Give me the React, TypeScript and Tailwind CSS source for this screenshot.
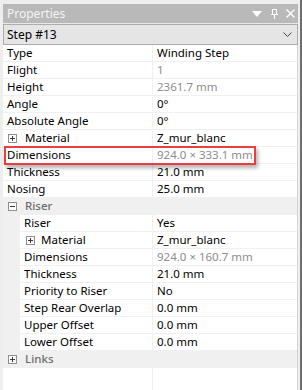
import React from 'react';

type Row =
  | { kind: 'prop'; name: string; value: string; level?: 0 | 1; expand?: boolean; dim?: boolean }
  | { kind: 'cat'; name: string; open: boolean };

const rows: Row[] = [
  { kind: 'prop', name: 'Type', value: 'Winding Step' },
  { kind: 'prop', name: 'Flight', value: '1', dim: true },
  { kind: 'prop', name: 'Height', value: '2361.7 mm', dim: true },
  { kind: 'prop', name: 'Angle', value: '0°' },
  { kind: 'prop', name: 'Absolute Angle', value: '0°' },
  { kind: 'prop', name: 'Material', value: 'Z_mur_blanc', expand: true },
  { kind: 'prop', name: 'Dimensions', value: '924.0 × 333.1 mm', dim: true },
  { kind: 'prop', name: 'Thickness', value: '21.0 mm' },
  { kind: 'prop', name: 'Nosing', value: '25.0 mm' },
  { kind: 'cat', name: 'Riser', open: true },
  { kind: 'prop', name: 'Riser', value: 'Yes', level: 1 },
  { kind: 'prop', name: 'Material', value: 'Z_mur_blanc', level: 1, expand: true },
  { kind: 'prop', name: 'Dimensions', value: '924.0 × 160.7 mm', level: 1, dim: true },
  { kind: 'prop', name: 'Thickness', value: '21.0 mm', level: 1 },
  { kind: 'prop', name: 'Priority to Riser', value: 'No', level: 1 },
  { kind: 'prop', name: 'Step Rear Overlap', value: '0.0 mm', level: 1 },
  { kind: 'prop', name: 'Upper Offset', value: '0.0 mm', level: 1 },
  { kind: 'prop', name: 'Lower Offset', value: '0.0 mm', level: 1 },
  { kind: 'cat', name: 'Links', open: false },
];

function ToggleBox({ open }: { open: boolean }) {
  return (
    <span className="w-[9px] h-[9px] border border-[#8e8f8f] bg-white flex items-center justify-center shrink-0 relative">
      <span className="absolute w-[5px] h-px bg-[#3b3b3b]" />
      {!open && <span className="absolute h-[5px] w-px bg-[#3b3b3b]" />}
    </span>
  );
}

function PropRow({ row }: { row: Extract<Row, { kind: 'prop' }> }) {
  const sub = row.level === 1;
  return (
    <div className="flex h-[17px] border-b border-[#f0f0f0] bg-white">
      {sub && <div className="w-[17px] bg-[#f0f0f0] shrink-0" />}
      <div
        className={`${sub ? 'w-[133px]' : 'w-[150px]'} shrink-0 border-r border-[#f0f0f0] flex items-center ${
          row.expand ? (sub ? 'pl-[6px]' : 'pl-[5px]') : 'pl-[4px]'
        } text-black whitespace-nowrap overflow-hidden`}
      >
        {row.expand && <ToggleBox open={false} />}
        <span className={row.expand ? (sub ? 'ml-[6px]' : 'ml-[8px]') : ''}>{row.name}</span>
      </div>
      <div className={`flex-1 flex items-center pl-[4px] whitespace-nowrap ${row.dim ? 'text-[#8d8d8d]' : 'text-black'}`}>
        {row.value}
      </div>
    </div>
  );
}

function CatRow({ row }: { row: Extract<Row, { kind: 'cat' }> }) {
  return (
    <div className="flex items-center h-[17px] border-b border-[#f0f0f0] bg-[#f0f0f0] pl-[5px]">
      <ToggleBox open={row.open} />
      <span className="ml-[8px] text-[#6d6d6d] font-medium">{row.name}</span>
    </div>
  );
}

export default function App() {
  return (
    <div className="w-[302px] h-[390px] bg-[#6e6e6e] overflow-hidden relative font-['Noto_Sans',sans-serif] text-[11.5px] leading-none">
      <div className="w-[300px] h-full bg-[#eeeeee] pt-[4px] pl-[3px] pr-[2px] flex flex-col">
        {/* title bar */}
        <div className="h-[19px] bg-[#b9b9b9] flex items-center pl-[4px] pr-[3px] text-[#f4f4f4] text-[12px] shrink-0">
          <span className="flex-1">Properties</span>
          <svg width="10" height="6" viewBox="0 0 10 6" className="mr-[8px]">
            <path d="M0 0h10L5 6z" fill="#fff" />
          </svg>
          <svg width="9" height="10" viewBox="0 0 9 10" className="mr-[7px]">
            <path d="M2 0.5h5M2.5 0.5v5M6.5 0.5v5M1 5.5h7M4.5 5.5v4.5" stroke="#fff" strokeWidth="1" fill="none" />
          </svg>
          <svg width="9" height="9" viewBox="0 0 9 9">
            <path d="M0.5 0.5l8 8M8.5 0.5l-8 8" stroke="#fff" strokeWidth="1.4" />
          </svg>
        </div>
        <div className="h-px bg-[#e8e8e8] shrink-0" />
        {/* object selector */}
        <div className="h-[21px] bg-[#e5e5e5] border border-[#acacac] flex items-center pl-[3px] pr-[5px] text-black text-[12px] shrink-0">
          <span className="flex-1">Step #13</span>
          <svg width="9" height="5" viewBox="0 0 9 5">
            <path d="M0.5 0.5l4 4 4-4" stroke="#444" strokeWidth="1" fill="none" />
          </svg>
        </div>
        {/* grid */}
        <div className="flex-1 bg-white border-r border-[#d4d4d4] flex flex-col">
          {rows.map((r, i) =>
            r.kind === 'cat' ? <CatRow key={i} row={r} /> : <PropRow key={i} row={r} />
          )}
          <div className="flex-1 flex">
            <div className="w-[150px] border-r border-[#f0f0f0]" />
          </div>
        </div>
      </div>
      {/* highlight annotation */}
      <div className="absolute left-[4px] top-[146px] w-[252px] h-[19px] border-2 border-[#ee3d3f] shadow-[2px_3px_4px_rgba(0,0,0,0.3)]" />
    </div>
  );
}
